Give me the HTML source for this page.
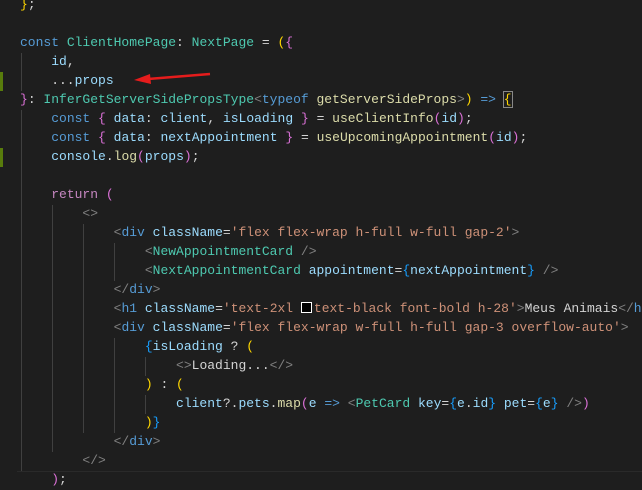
<!DOCTYPE html>
<html><head><style>
html,body{margin:0;padding:0;background:#1e1e1e;width:642px;height:490px;overflow:hidden}
#c{position:absolute;left:20px;top:-5px;font-family:"Liberation Mono",monospace;font-size:13px;line-height:19px;color:#d4d4d4;white-space:pre;margin:0}
.k{color:#569cd6}.t{color:#4ec9b0}.v{color:#9cdcfe}.f{color:#dcdcaa}.s{color:#ce9178}.g{color:#808080}
.y{color:#ffd700}.p{color:#da70d6}.b{color:#179fff}.r{color:#c586c0}
.guide{position:absolute;width:1px;background:#404040}
.mk{position:absolute;left:0;width:3px;background:#587c0c}
.box{display:inline-block;width:9px;height:9px;border:1px solid #fff;background:#000;vertical-align:-1px;margin-right:2px}
</style></head><body>
<div class="mk" style="top:72px;height:19px"></div>
<div class="mk" style="top:148px;height:19px"></div>
<div class="guide" style="left:21px;top:53px;height:38px"></div>
<div class="guide" style="left:21px;top:110px;height:361px"></div>
<div class="guide" style="left:52px;top:205px;height:247px"></div>
<div class="guide" style="left:83px;top:224px;height:209px"></div>
<div class="guide" style="left:114px;top:243px;height:38px"></div>
<div class="guide" style="left:114px;top:338px;height:95px"></div>
<div class="guide" style="left:145px;top:357px;height:19px"></div>
<div class="guide" style="left:145px;top:395px;height:19px"></div>
<div style="position:absolute;left:17px;top:471px;width:625px;height:19px;border-top:1px solid #2a2a2a;box-sizing:border-box"></div>
<pre id="c"><span class="y">}</span>;

<span class="k">const</span> <span class="t">ClientHomePage</span>: <span class="t">NextPage</span> = <span class="y">(</span><span class="p">{</span>
    <span class="v">id</span>,
    ...<span class="v">props</span>
<span class="p">}</span>: <span class="t">InferGetServerSidePropsType</span><span class="g">&lt;</span><span class="k">typeof</span> <span class="f">getServerSideProps</span><span class="g">&gt;</span><span class="y">)</span> <span class="k">=&gt;</span> <span class="y" style="outline:1px solid #888">{</span>
    <span class="k">const</span> <span class="p">{</span> <span class="v">data</span>: <span class="v">client</span>, <span class="v">isLoading</span> <span class="p">}</span> = <span class="f">useClientInfo</span><span class="p">(</span><span class="v">id</span><span class="p">)</span>;
    <span class="k">const</span> <span class="p">{</span> <span class="v">data</span>: <span class="v">nextAppointment</span> <span class="p">}</span> = <span class="f">useUpcomingAppointment</span><span class="p">(</span><span class="v">id</span><span class="p">)</span>;
    <span class="v">console</span>.<span class="f">log</span><span class="p">(</span><span class="v">props</span><span class="p">)</span>;

    <span class="r">return</span> <span class="p">(</span>
        <span class="g">&lt;&gt;</span>
            <span class="g">&lt;</span><span class="k">div</span> <span class="v">className</span>=<span class="s">'flex flex-wrap h-full w-full gap-2'</span><span class="g">&gt;</span>
                <span class="g">&lt;</span><span class="t">NewAppointmentCard</span> <span class="g">/&gt;</span>
                <span class="g">&lt;</span><span class="t">NextAppointmentCard</span> <span class="v">appointment</span>=<span class="b">{</span><span class="v">nextAppointment</span><span class="b">}</span> <span class="g">/&gt;</span>
            <span class="g">&lt;/</span><span class="k">div</span><span class="g">&gt;</span>
            <span class="g">&lt;</span><span class="k">h1</span> <span class="v">className</span>=<span class="s">'text-2xl <span class="box"></span>text-black font-bold h-28'</span><span class="g">&gt;</span>Meus Animais<span class="g">&lt;/</span><span class="k">h1</span><span class="g">&gt;</span>
            <span class="g">&lt;</span><span class="k">div</span> <span class="v">className</span>=<span class="s">'flex flex-wrap w-full h-full gap-3 overflow-auto'</span><span class="g">&gt;</span>
                <span class="b">{</span><span class="v">isLoading</span> ? <span class="y">(</span>
                    <span class="g">&lt;&gt;</span>Loading...<span class="g">&lt;/&gt;</span>
                <span class="y">)</span> : <span class="y">(</span>
                    <span class="v">client</span>?.<span class="v">pets</span>.<span class="f">map</span><span class="p">(</span><span class="v">e</span> <span class="k">=&gt;</span> <span class="g">&lt;</span><span class="t">PetCard</span> <span class="v">key</span>=<span class="b">{</span><span class="v">e</span>.<span class="v">id</span><span class="b">}</span> <span class="v">pet</span>=<span class="b">{</span><span class="v">e</span><span class="b">}</span> <span class="g">/&gt;</span><span class="p">)</span>
                <span class="y">)</span><span class="b">}</span>
            <span class="g">&lt;/</span><span class="k">div</span><span class="g">&gt;</span>
        <span class="g">&lt;/&gt;</span>
    <span class="p">)</span>;</pre>
<svg style="position:absolute;left:0;top:0" width="642" height="490">
<line x1="210" y1="74" x2="148" y2="79" stroke="#e51c1c" stroke-width="2.5"/>
<polygon points="134,80 150,74 151,84" fill="#e51c1c"/>
</svg>
</body></html>
